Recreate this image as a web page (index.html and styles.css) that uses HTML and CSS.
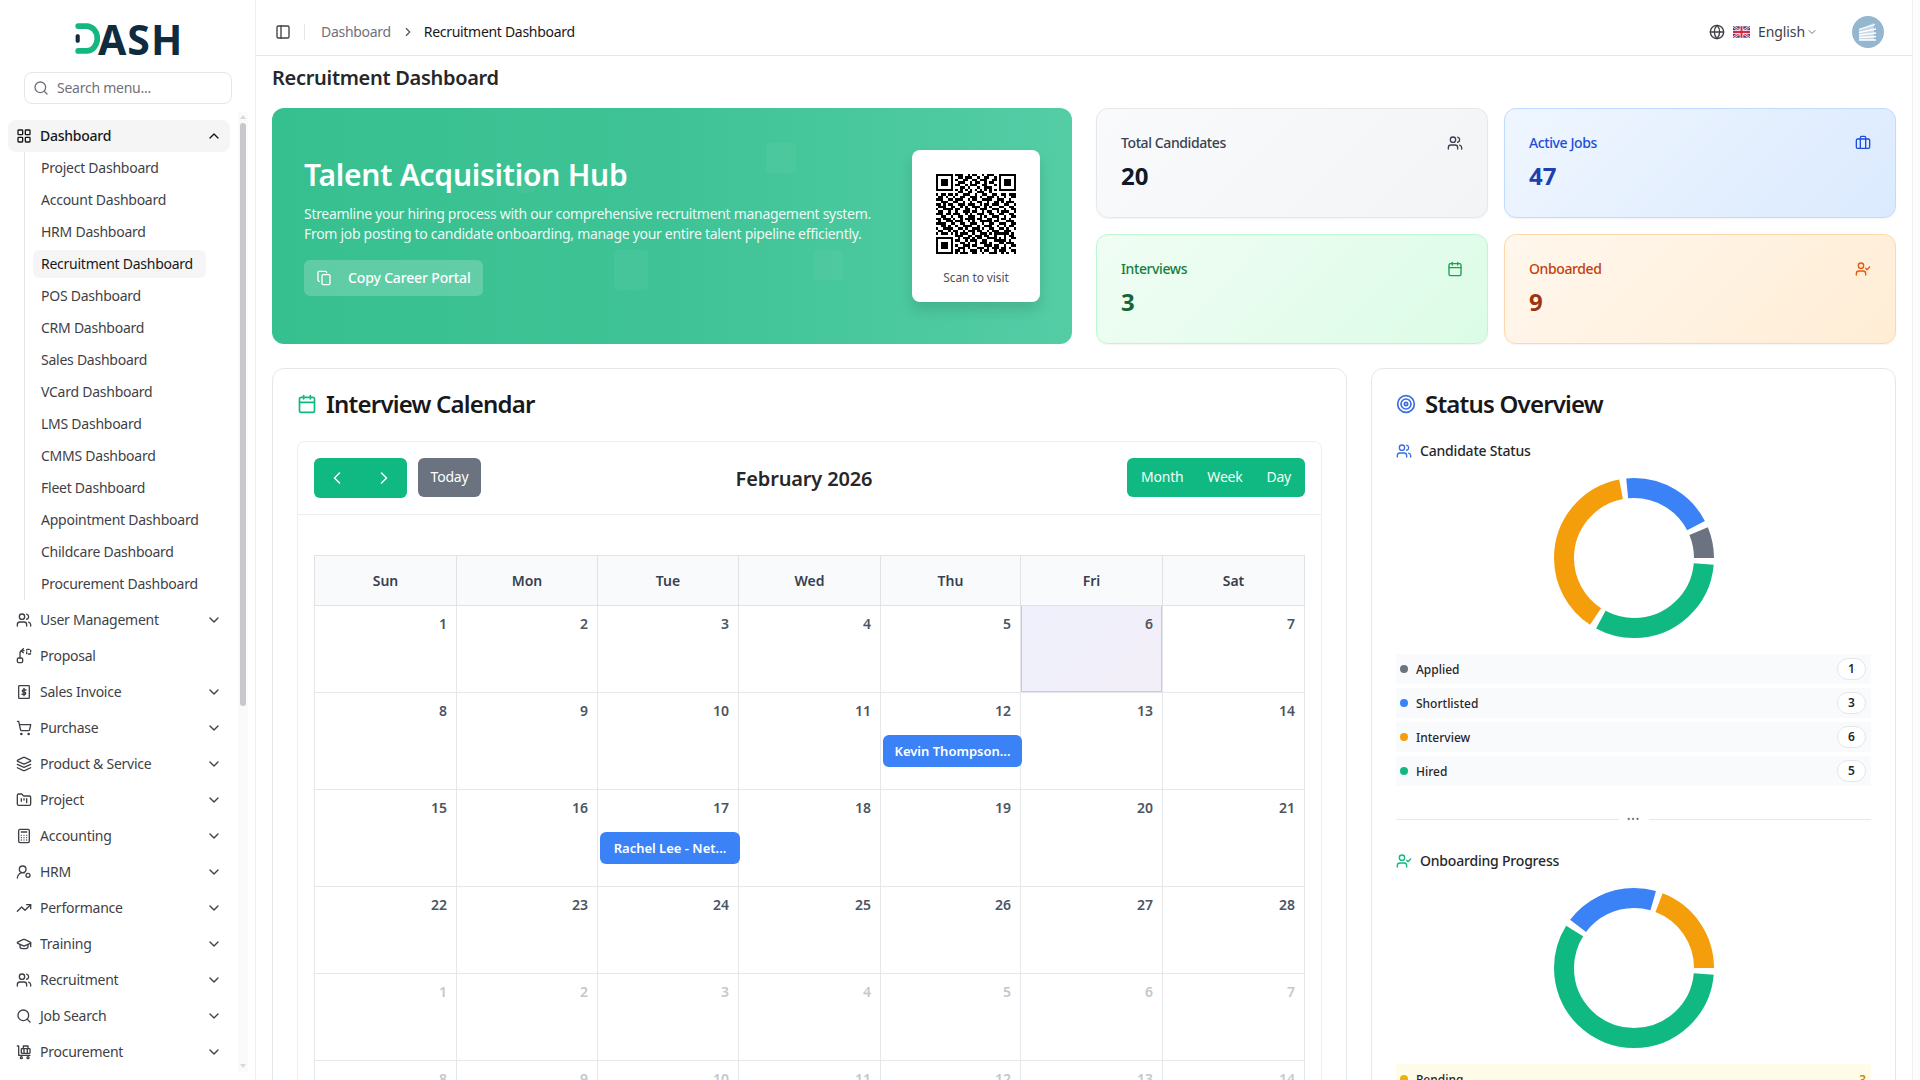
FILE: index.html
```html
<!DOCTYPE html>
<html lang="en">
  <head>
    <meta charset="UTF-8" />
    <meta name="viewport" content="width=device-width, initial-scale=1.0" />
    <title>Recruitment Dashboard</title>
    <link rel="stylesheet" href="styles.css">
  </head>
  <body>
    <!-- icon sprite -->
    <svg class="sprite" xmlns="http://www.w3.org/2000/svg">
      <symbol id="i-grid" viewBox="0 0 24 24"><rect x="3" y="3" width="7" height="7" rx="1"/><rect x="14" y="3" width="7" height="7" rx="1"/><rect x="14" y="14" width="7" height="7" rx="1"/><rect x="3" y="14" width="7" height="7" rx="1"/></symbol>
      <symbol id="i-search" viewBox="0 0 24 24"><circle cx="11" cy="11" r="8"/><path d="m21 21-4.3-4.3"/></symbol>
      <symbol id="i-down" viewBox="0 0 24 24"><path d="m6 9 6 6 6-6"/></symbol>
      <symbol id="i-up" viewBox="0 0 24 24"><path d="m18 15-6-6-6 6"/></symbol>
      <symbol id="i-left" viewBox="0 0 24 24"><path d="m15 18-6-6 6-6"/></symbol>
      <symbol id="i-right" viewBox="0 0 24 24"><path d="m9 18 6-6-6-6"/></symbol>
      <symbol id="i-users" viewBox="0 0 24 24"><path d="M16 21v-2a4 4 0 0 0-4-4H6a4 4 0 0 0-4 4v2"/><circle cx="9" cy="7" r="4"/><path d="M22 21v-2a4 4 0 0 0-3-3.87"/><path d="M16 3.13a4 4 0 0 1 0 7.75"/></symbol>
      <symbol id="i-proposal" viewBox="0 0 24 24"><rect x="2" y="15" width="8" height="7" rx="2"/><path d="M6 15V8a4 4 0 0 1 4-4h2"/><path d="m11 1-3 3 3 3"/><rect x="16" y="2" width="6" height="7" rx="1" stroke-dasharray="3 2.5"/></symbol>
      <symbol id="i-invoice" viewBox="0 0 24 24"><rect x="4" y="2.5" width="16" height="19" rx="1" stroke-dasharray="2 .8"/><path d="M12 6.5v11"/><path d="M15 9h-4a1.6 1.6 0 0 0 0 3.2h2a1.6 1.6 0 0 1 0 3.2H9"/></symbol>
      <symbol id="i-cart" viewBox="0 0 24 24"><circle cx="8" cy="21" r="1"/><circle cx="19" cy="21" r="1"/><path d="M2.05 2.05h2l2.66 12.42a2 2 0 0 0 2 1.58h9.78a2 2 0 0 0 1.95-1.57l1.65-7.43H5.12"/></symbol>
      <symbol id="i-layers" viewBox="0 0 24 24"><path d="M12.83 2.18a2 2 0 0 0-1.66 0L2.6 6.08a1 1 0 0 0 0 1.83l8.58 3.91a2 2 0 0 0 1.66 0l8.58-3.9a1 1 0 0 0 0-1.83Z"/><path d="m22 17.65-9.17 4.16a2 2 0 0 1-1.66 0L2 17.65"/><path d="m22 12.65-9.17 4.16a2 2 0 0 1-1.66 0L2 12.65"/></symbol>
      <symbol id="i-folder" viewBox="0 0 24 24"><path d="M4 20h16a2 2 0 0 0 2-2V8a2 2 0 0 0-2-2h-7.93a2 2 0 0 1-1.66-.9l-.82-1.2A2 2 0 0 0 7.93 3H4a2 2 0 0 0-2 2v13c0 1.1.9 2 2 2Z"/><path d="M8 10v4"/><path d="M12 10v2"/><path d="M16 10v6"/></symbol>
      <symbol id="i-calc" viewBox="0 0 24 24"><rect x="4" y="2" width="16" height="20" rx="2"/><path d="M8 6h8"/><path d="M8 11h.01M12 11h.01M16 11h.01M8 14.5h.01M12 14.5h.01M16 14.5h.01M8 18h.01M12 18h.01M16 18h.01"/></symbol>
      <symbol id="i-usercog" viewBox="0 0 24 24"><path d="M2 21a8 8 0 0 1 10.43-7.62"/><circle cx="10" cy="8" r="5"/><circle cx="18" cy="17" r="3"/></symbol>
      <symbol id="i-trend" viewBox="0 0 24 24"><path d="M22 7 13.5 15.5 8.5 10.5 2 17"/><path d="M16 7h6v6"/></symbol>
      <symbol id="i-cap" viewBox="0 0 24 24"><path d="M21.42 10.92a1 1 0 0 0-.02-1.84L12.83 5.18a2 2 0 0 0-1.66 0L2.6 9.08a1 1 0 0 0 0 1.83l8.57 3.91a2 2 0 0 0 1.66 0z"/><path d="M22 10v6"/><path d="M6 12.5V16a6 3 0 0 0 12 0v-3.5"/></symbol>
      <symbol id="i-basket" viewBox="0 0 24 24"><path d="M2 3h2v14h17"/><rect x="8" y="7" width="13" height="7" rx="1"/><path d="M11 7V3h7v4"/><path d="M12 7v7M17 7v7"/><circle cx="8" cy="20.5" r="1.5"/><circle cx="18" cy="20.5" r="1.5"/></symbol>
      <symbol id="i-calendar" viewBox="0 0 24 24"><path d="M8 2v4"/><path d="M16 2v4"/><rect x="3" y="4" width="18" height="18" rx="2"/><path d="M3 10h18"/></symbol>
      <symbol id="i-target" viewBox="0 0 24 24"><circle cx="12" cy="12" r="10"/><circle cx="12" cy="12" r="6"/><circle cx="12" cy="12" r="2"/></symbol>
      <symbol id="i-usercheck" viewBox="0 0 24 24"><path d="M16 21v-2a4 4 0 0 0-4-4H6a4 4 0 0 0-4 4v2"/><circle cx="9" cy="7" r="4"/><path d="m16 11 2 2 4-4"/></symbol>
      <symbol id="i-brief" viewBox="0 0 24 24"><path d="M16 20V4a2 2 0 0 0-2-2h-4a2 2 0 0 0-2 2v16"/><rect x="2" y="6" width="20" height="14" rx="2"/></symbol>
      <symbol id="i-copy" viewBox="0 0 24 24"><rect x="9" y="7" width="12" height="15" rx="2"/><path d="M5 17a2 2 0 0 1-2-2V4a2 2 0 0 1 2-2h9a2 2 0 0 1 2 2"/></symbol>
      <symbol id="i-panel" viewBox="0 0 24 24"><rect x="3" y="3" width="18" height="18" rx="2"/><path d="M9 3v18"/></symbol>
      <symbol id="i-globe" viewBox="0 0 24 24"><circle cx="12" cy="12" r="10"/><path d="M12 2a14.5 14.5 0 0 0 0 20 14.5 14.5 0 0 0 0-20"/><path d="M2 12h20"/></symbol>
    </svg>

    <div class="app">
      <!-- sidebar -->
      <aside class="sidebar">
        <div class="logo">
          <svg class="logo-mark" viewBox="0 0 24 30" role="img" aria-label="D">
            <path d="M3 3h8a10.500 12 0 0 1 0 24H3" fill="none" stroke="#14b77f" stroke-width="5.5" stroke-linecap="round"/>
            <rect x="0.5" y="11" width="4" height="8" rx="1.5" fill="#0f2b3d"/>
          </svg>
          <span class="logo-text">ASH</span>
        </div>
        <div class="search">
          <svg class="icon"><use href="#i-search"/></svg>
          <span>Search menu...</span>
        </div>
        <div class="side-body">
          <nav class="menu">
            <a class="menu-row menu-open">
              <svg class="icon"><use href="#i-grid"/></svg>
              <span class="menu-label">Dashboard</span>
              <svg class="icon"><use href="#i-up"/></svg>
            </a>
            <div class="submenu">
              <a class="sub-item">Project Dashboard</a>
              <a class="sub-item">Account Dashboard</a>
              <a class="sub-item">HRM Dashboard</a>
              <a class="sub-item sub-active">Recruitment Dashboard</a>
              <a class="sub-item">POS Dashboard</a>
              <a class="sub-item">CRM Dashboard</a>
              <a class="sub-item">Sales Dashboard</a>
              <a class="sub-item">VCard Dashboard</a>
              <a class="sub-item">LMS Dashboard</a>
              <a class="sub-item">CMMS Dashboard</a>
              <a class="sub-item">Fleet Dashboard</a>
              <a class="sub-item">Appointment Dashboard</a>
              <a class="sub-item">Childcare Dashboard</a>
              <a class="sub-item">Procurement Dashboard</a>
            </div>
            <a class="menu-row"><svg class="icon"><use href="#i-users"/></svg><span class="menu-label">User Management</span><svg class="icon"><use href="#i-down"/></svg></a>
            <a class="menu-row"><svg class="icon"><use href="#i-proposal"/></svg><span class="menu-label">Proposal</span></a>
            <a class="menu-row"><svg class="icon"><use href="#i-invoice"/></svg><span class="menu-label">Sales Invoice</span><svg class="icon"><use href="#i-down"/></svg></a>
            <a class="menu-row"><svg class="icon"><use href="#i-cart"/></svg><span class="menu-label">Purchase</span><svg class="icon"><use href="#i-down"/></svg></a>
            <a class="menu-row"><svg class="icon"><use href="#i-layers"/></svg><span class="menu-label">Product &amp; Service</span><svg class="icon"><use href="#i-down"/></svg></a>
            <a class="menu-row"><svg class="icon"><use href="#i-folder"/></svg><span class="menu-label">Project</span><svg class="icon"><use href="#i-down"/></svg></a>
            <a class="menu-row"><svg class="icon"><use href="#i-calc"/></svg><span class="menu-label">Accounting</span><svg class="icon"><use href="#i-down"/></svg></a>
            <a class="menu-row"><svg class="icon"><use href="#i-usercog"/></svg><span class="menu-label">HRM</span><svg class="icon"><use href="#i-down"/></svg></a>
            <a class="menu-row"><svg class="icon"><use href="#i-trend"/></svg><span class="menu-label">Performance</span><svg class="icon"><use href="#i-down"/></svg></a>
            <a class="menu-row"><svg class="icon"><use href="#i-cap"/></svg><span class="menu-label">Training</span><svg class="icon"><use href="#i-down"/></svg></a>
            <a class="menu-row"><svg class="icon"><use href="#i-users"/></svg><span class="menu-label">Recruitment</span><svg class="icon"><use href="#i-down"/></svg></a>
            <a class="menu-row"><svg class="icon"><use href="#i-search"/></svg><span class="menu-label">Job Search</span><svg class="icon"><use href="#i-down"/></svg></a>
            <a class="menu-row"><svg class="icon"><use href="#i-basket"/></svg><span class="menu-label">Procurement</span><svg class="icon"><use href="#i-down"/></svg></a>
          </nav>
          <div class="side-scroll">
            <span class="arrow-up"></span>
            <span class="side-thumb"></span>
            <span class="arrow-down"></span>
          </div>
        </div>
      </aside>

      <div class="main">
        <!-- top bar -->
        <header class="topbar">
          <svg class="icon panel-icon"><use href="#i-panel"/></svg>
          <span class="top-divider"></span>
          <span class="crumb">Dashboard</span>
          <svg class="icon crumb-sep"><use href="#i-right"/></svg>
          <span class="crumb crumb-now">Recruitment Dashboard</span>
          <div class="top-right">
            <svg class="icon globe"><use href="#i-globe"/></svg>
            <svg class="flag" viewBox="0 0 60 40">
              <rect width="60" height="40" fill="#2b3f8c"/>
              <path d="M0 0l60 40M60 0L0 40" stroke="#fff" stroke-width="9"/>
              <path d="M0 0l60 40M60 0L0 40" stroke="#d8283f" stroke-width="4"/>
              <path d="M30 0v40M0 20h60" stroke="#fff" stroke-width="13"/>
              <path d="M30 0v40M0 20h60" stroke="#d8283f" stroke-width="7"/>
            </svg>
            <span class="lang">English</span>
            <svg class="icon lang-caret"><use href="#i-down"/></svg>
            <svg class="avatar" viewBox="0 0 32 32">
              <circle cx="16" cy="16" r="16" fill="#94b6ce"/>
              <path d="M7 13l15-6v17H7z" fill="#c4d8e6"/>
              <path d="M7 13.5l16-5M7 16.5l17-3.500M7 19l17-2M7 21.500l17-1M7 24h17" stroke="#fff" stroke-width="1.300" fill="none"/>
            </svg>
          </div>
        </header>

        <main class="content">
          <h1 class="page-title">Recruitment Dashboard</h1>

          <section class="top-grid">
            <!-- hero banner -->
            <div class="hero">
              <span class="hero-deco deco-1"></span>
              <span class="hero-deco deco-2"></span>
              <span class="hero-deco deco-3"></span>
              <span class="hero-deco deco-4"></span>
              <div class="hero-text">
                <h2 class="hero-title">Talent Acquisition Hub</h2>
                <p class="hero-desc">Streamline your hiring process with our comprehensive recruitment management system.<br>From job posting to candidate onboarding, manage your entire talent pipeline efficiently.</p>
                <button class="hero-btn">
                  <svg class="icon"><use href="#i-copy"/></svg>
                  Copy Career Portal
                </button>
              </div>
              <div class="qr-card">
                <svg class="qr" viewBox="0 0 33 33" shape-rendering="crispEdges">
                  <path stroke="#000" d="M0 .5h7M8 .5h3M13 .5h1M15 .5h2M19 .5h1M21 .5h3M26 .5h7
                  M0 1.5h1M6 1.5h1M9 1.5h2M12 1.5h3M17 1.5h1M20 1.5h2M24 1.5h1M26 1.5h1M32 1.5h1
                  M0 2.5h1M2 2.5h3M6 2.5h1M8 2.5h1M11 2.5h2M15 2.5h2M18 2.5h3M23 2.5h2M26 2.5h1M28 2.5h3M32 2.5h1
                  M0 3.5h1M2 3.5h3M6 3.5h1M9 3.5h3M14 3.5h1M16 3.5h2M20 3.5h1M22 3.5h2M26 3.5h1M28 3.5h3M32 3.5h1
                  M0 4.5h1M2 4.5h3M6 4.5h1M8 4.5h2M12 4.5h1M14 4.5h3M19 4.5h2M24 4.5h1M26 4.5h1M28 4.5h3M32 4.5h1
                  M0 5.5h1M6 5.5h1M10 5.5h2M13 5.5h1M17 5.5h1M20 5.5h3M26 5.5h1M32 5.5h1
                  M0 6.5h7M8 6.5h1M10 6.5h1M12 6.5h1M14 6.5h1M16 6.5h1M18 6.5h1M20 6.5h1M22 6.5h1M24 6.5h1M26 6.5h7
                  M9 7.5h2M13 7.5h2M17 7.5h3M22 7.5h1
                  M0 8.5h1M2 8.5h2M5 8.5h2M8 8.5h1M11 8.5h3M16 8.5h1M19 8.5h2M23 8.5h2M27 8.5h2M30 8.5h3
                  M1 9.5h2M4 9.5h1M7 9.5h1M10 9.5h2M14 9.5h3M18 9.5h1M21 9.5h3M25 9.5h1M28 9.5h1M31 9.5h2
                  M0 10.5h3M5 10.5h2M8 10.5h3M13 10.5h1M15 10.5h2M19 10.5h4M25 10.5h3M30 10.5h1
                  M2 11.5h3M7 11.5h2M11 11.5h1M14 11.5h1M17 11.5h2M21 11.5h1M24 11.5h2M27 11.5h1M29 11.5h3
                  M0 12.5h2M3 12.5h1M5 12.5h2M9 12.5h3M13 12.5h3M18 12.5h1M20 12.5h2M23 12.5h3M28 12.5h2M32 12.5h1
                  M1 13.5h3M6 13.5h2M10 13.5h1M12 13.5h1M15 13.5h3M20 13.5h1M22 13.5h1M26 13.5h2M30 13.5h2
                  M0 14.5h1M3 14.5h4M8 14.5h2M12 14.5h2M16 14.5h1M18 14.5h3M23 14.5h3M28 14.5h1M31 14.5h2
                  M1 15.5h2M5 15.5h1M8 15.5h1M11 15.5h3M15 15.5h2M19 15.5h1M21 15.5h2M25 15.5h1M27 15.5h3M32 15.5h1
                  M0 16.5h3M4 16.5h2M7 16.5h3M12 16.5h1M14 16.5h1M17 16.5h3M22 16.5h2M26 16.5h2M30 16.5h2
                  M2 17.5h2M6 17.5h1M9 17.5h2M13 17.5h3M18 17.5h1M20 17.5h1M23 17.5h3M28 17.5h1M31 17.5h2
                  M0 18.5h2M3 18.5h3M7 18.5h1M10 18.5h1M12 18.5h4M17 18.5h2M21 18.5h2M25 18.5h1M27 18.5h2M30 18.5h1
                  M1 19.5h1M4 19.5h3M8 19.5h3M13 19.5h1M15 19.5h1M18 19.5h5M24 19.5h2M29 19.5h3
                  M0 20.5h4M6 20.5h2M10 20.5h2M14 20.5h3M19 20.5h1M22 20.5h2M26 20.5h3M31 20.5h2
                  M2 21.5h2M5 21.5h1M8 21.5h1M11 21.5h4M17 21.5h1M20 21.5h3M25 21.5h1M28 21.5h1M30 21.5h2
                  M0 22.5h1M3 22.5h4M9 22.5h2M12 22.5h1M15 22.5h3M19 22.5h1M22 22.5h2M26 22.5h2M29 22.5h1M32 22.5h1
                  M1 23.5h2M5 23.5h1M7 23.5h2M11 23.5h1M13 23.5h3M17 23.5h2M21 23.5h1M23 23.5h3M28 23.5h3
                  M0 24.5h1M2 24.5h3M6 24.5h1M8 24.5h1M10 24.5h3M15 24.5h1M18 24.5h3M22 24.5h1M24 24.5h6M31 24.5h1
                  M8 25.5h3M13 25.5h2M16 25.5h3M20 25.5h2M24 25.5h1M28 25.5h1M30 25.5h2
                  M0 26.5h7M9 26.5h1M11 26.5h3M15 26.5h1M17 26.5h2M21 26.5h3M24 26.5h1M26 26.5h1M28 26.5h1M31 26.5h2
                  M0 27.5h1M6 27.5h1M8 27.5h2M12 27.5h1M14 27.5h3M19 27.5h2M24 27.5h5M30 27.5h1
                  M0 28.5h1M2 28.5h3M6 28.5h1M10 28.5h2M13 28.5h1M16 28.5h1M18 28.5h3M22 28.5h1M26 28.5h2M29 28.5h3
                  M0 29.5h1M2 29.5h3M6 29.5h1M8 29.5h1M11 29.5h3M15 29.5h2M20 29.5h3M24 29.5h2M28 29.5h1M31 29.5h2
                  M0 30.5h1M2 30.5h3M6 30.5h1M9 30.5h3M13 30.5h1M17 30.5h3M21 30.5h1M23 30.5h3M27 30.5h2M30 30.5h1
                  M0 31.5h1M6 31.5h1M8 31.5h2M11 31.5h1M14 31.5h3M18 31.5h1M20 31.5h2M24 31.5h1M26 31.5h3M31 31.5h2
                  M0 32.5h7M8 32.5h1M10 32.5h3M15 32.5h2M19 32.5h1M22 32.5h3M27 32.5h1M29 32.5h1M32 32.5h1"/>
                </svg>
                <span class="qr-label">Scan to visit</span>
              </div>
            </div>

            <!-- stat cards -->
            <div class="stats">
              <div class="stat stat-gray">
                <div class="stat-head"><span>Total Candidates</span><svg class="icon"><use href="#i-users"/></svg></div>
                <div class="stat-num">20</div>
              </div>
              <div class="stat stat-blue">
                <div class="stat-head"><span>Active Jobs</span><svg class="icon"><use href="#i-brief"/></svg></div>
                <div class="stat-num">47</div>
              </div>
              <div class="stat stat-green">
                <div class="stat-head"><span>Interviews</span><svg class="icon"><use href="#i-calendar"/></svg></div>
                <div class="stat-num">3</div>
              </div>
              <div class="stat stat-orange">
                <div class="stat-head"><span>Onboarded</span><svg class="icon"><use href="#i-usercheck"/></svg></div>
                <div class="stat-num">9</div>
              </div>
            </div>
          </section>

          <section class="lower-grid">
            <!-- calendar -->
            <div class="card">
              <h2 class="card-title"><svg class="icon icon-green"><use href="#i-calendar"/></svg>Interview Calendar</h2>
              <div class="calendar">
                <div class="cal-toolbar">
                  <div class="cal-nav">
                    <div class="nav-group">
                      <svg class="icon"><use href="#i-left"/></svg>
                      <svg class="icon"><use href="#i-right"/></svg>
                    </div>
                    <button class="today-btn">Today</button>
                  </div>
                  <div class="cal-month">February 2026</div>
                  <div class="view-group"><span>Month</span><span>Week</span><span>Day</span></div>
                </div>
                <div class="cal-body">
                  <table class="cal-table">
                    <thead>
                      <tr><th>Sun</th><th>Mon</th><th>Tue</th><th>Wed</th><th>Thu</th><th>Fri</th><th>Sat</th></tr>
                    </thead>
                    <tbody>
                      <tr>
                        <td><div class="day">1</div></td><td><div class="day">2</div></td><td><div class="day">3</div></td><td><div class="day">4</div></td><td><div class="day">5</div></td><td class="today"><div class="day">6</div></td><td><div class="day">7</div></td>
                      </tr>
                      <tr>
                        <td><div class="day">8</div></td><td><div class="day">9</div></td><td><div class="day">10</div></td><td><div class="day">11</div></td>
                        <td><div class="day">12</div><div class="event">Kevin Thompson...</div></td>
                        <td><div class="day">13</div></td><td><div class="day">14</div></td>
                      </tr>
                      <tr>
                        <td><div class="day">15</div></td><td><div class="day">16</div></td>
                        <td><div class="day">17</div><div class="event">Rachel Lee - Net...</div></td>
                        <td><div class="day">18</div></td><td><div class="day">19</div></td><td><div class="day">20</div></td><td><div class="day">21</div></td>
                      </tr>
                      <tr>
                        <td><div class="day">22</div></td><td><div class="day">23</div></td><td><div class="day">24</div></td><td><div class="day">25</div></td><td><div class="day">26</div></td><td><div class="day">27</div></td><td><div class="day">28</div></td>
                      </tr>
                      <tr class="other-month">
                        <td><div class="day">1</div></td><td><div class="day">2</div></td><td><div class="day">3</div></td><td><div class="day">4</div></td><td><div class="day">5</div></td><td><div class="day">6</div></td><td><div class="day">7</div></td>
                      </tr>
                      <tr class="other-month">
                        <td><div class="day">8</div></td><td><div class="day">9</div></td><td><div class="day">10</div></td><td><div class="day">11</div></td><td><div class="day">12</div></td><td><div class="day">13</div></td><td><div class="day">14</div></td>
                      </tr>
                    </tbody>
                  </table>
                </div>
              </div>
            </div>

            <!-- status overview -->
            <div class="card">
              <h2 class="card-title"><svg class="icon icon-blue"><use href="#i-target"/></svg>Status Overview</h2>

              <h3 class="sub-title"><svg class="icon icon-blue"><use href="#i-users"/></svg>Candidate Status</h3>
              <svg class="donut" viewBox="-80 -80 160 160">
                <g transform="scale(1 -1)" fill="none" stroke-width="20">
                  <circle r="70" pathLength="360" stroke="#6b7280" stroke-dasharray="22.67 360"/>
                  <circle r="70" pathLength="360" stroke="#3b82f6" stroke-dasharray="68 360" stroke-dashoffset="-27.67"/>
                  <circle r="70" pathLength="360" stroke="#f59e0b" stroke-dasharray="136 360" stroke-dashoffset="-100.67"/>
                  <circle r="70" pathLength="360" stroke="#10b981" stroke-dasharray="113.33 360" stroke-dashoffset="-241.67"/>
                </g>
              </svg>
              <ul class="legend">
                <li class="legend-row"><span class="dot dot-gray"></span><span class="legend-name">Applied</span><span class="badge">1</span></li>
                <li class="legend-row"><span class="dot dot-blue"></span><span class="legend-name">Shortlisted</span><span class="badge">3</span></li>
                <li class="legend-row"><span class="dot dot-orange"></span><span class="legend-name">Interview</span><span class="badge">6</span></li>
                <li class="legend-row"><span class="dot dot-green"></span><span class="legend-name">Hired</span><span class="badge">5</span></li>
              </ul>

              <div class="separator"><span></span><i>•••</i><span></span></div>

              <h3 class="sub-title"><svg class="icon icon-green"><use href="#i-usercheck"/></svg>Onboarding Progress</h3>
              <svg class="donut" viewBox="-80 -80 160 160">
                <g transform="scale(1 -1)" fill="none" stroke-width="20">
                  <circle r="70" pathLength="360" stroke="#f59e0b" stroke-dasharray="69 360"/>
                  <circle r="70" pathLength="360" stroke="#3b82f6" stroke-dasharray="69 360" stroke-dashoffset="-74"/>
                  <circle r="70" pathLength="360" stroke="#10b981" stroke-dasharray="207 360" stroke-dashoffset="-148"/>
                </g>
              </svg>
              <ul class="legend">
                <li class="legend-row legend-pending"><span class="dot dot-yellow"></span><span class="legend-name">Pending</span><span class="pending-num">3</span></li>
              </ul>
            </div>
          </section>
        </main>
      </div>

      <div class="page-scroll"></div>
    </div>
  </body>
</html>
```

FILE: styles.css
```css
* {
  margin: 0;
  padding: 0;
  box-sizing: border-box;
}

body {
  font-family: "Noto Sans", "Liberation Sans", sans-serif;
  color: #18181b;
  background: #fff;
  width: 100vw;
  height: 100vh;
  overflow: hidden;
}

.sprite {
  display: none;
}

.icon {
  width: 16px;
  height: 16px;
  flex: none;
  fill: none;
  stroke: currentColor;
  stroke-width: 2;
  stroke-linecap: round;
  stroke-linejoin: round;
}

.app {
  display: flex;
  height: 100%;
}

/* sidebar */
.sidebar {
  width: 256px;
  flex: none;
  border-right: 1px solid #eeeeef;
  display: flex;
  flex-direction: column;
  height: 100%;
  overflow: hidden;
}

.logo {
  height: 72px;
  padding: 23px 0 0 75px;
  display: flex;
  align-items: flex-start;
}

.logo-mark {
  width: 25px;
  height: 31px;
  flex: none;
}

.logo-text {
  font-size: 41px;
  line-height: 32px;
  font-weight: 700;
  letter-spacing: 1px;
  color: #0f2b3d;
  margin-left: -2px;
}

.search {
  margin-left: 24px;
  width: 208px;
  height: 32px;
  border: 1px solid #e5e7eb;
  border-radius: 8px;
  display: flex;
  align-items: center;
  gap: 8px;
  padding-left: 8px;
  font-size: 14px;
  letter-spacing: -0.25px;
  color: #71717a;
}

.search span {
  padding-bottom: 1px;
}

.side-body {
  display: flex;
  margin-top: 8px;
  flex: 1;
  min-height: 0;
}

.menu {
  width: 222px;
  margin: 8px 8px 0 8px;
  display: flex;
  flex-direction: column;
  gap: 4px;
}

.menu-row {
  height: 32px;
  display: flex;
  align-items: center;
  gap: 8px;
  padding: 0 8px;
  font-size: 14px;
  letter-spacing: -0.25px;
  color: #3f3f46;
  border-radius: 8px;
}

.menu-label {
  flex: 1;
  padding-bottom: 2px;
}

.menu-open {
  background: #f5f5f5;
  color: #18181b;
  font-weight: 500;
}

.submenu {
  margin: -4px 0 0 16px;
  border-left: 1px solid #e5e5e5;
  padding: 2px 0 2px 8px;
  display: flex;
  flex-direction: column;
  gap: 4px;
}

.sub-item {
  height: 28px;
  width: 173px;
  display: flex;
  align-items: center;
  padding: 0 0 2px 8px;
  font-size: 14px;
  letter-spacing: -0.25px;
  color: #3f3f46;
  border-radius: 6px;
  white-space: nowrap;
}

.sub-active {
  background: #f5f5f5;
  color: #18181b;
}

.side-scroll {
  width: 10px;
  background: #fafafa;
  display: flex;
  flex-direction: column;
  align-items: center;
  height: 960px;
  padding-top: 3px;
}

.side-thumb {
  width: 6px;
  height: 583px;
  margin-top: 4px;
  background: #c8c8cc;
  border-radius: 3px;
}

.arrow-up,
.arrow-down {
  width: 0;
  height: 0;
  border-left: 3px solid transparent;
  border-right: 3px solid transparent;
}

.arrow-up {
  border-bottom: 4px solid #d8d8d8;
}

.arrow-down {
  margin-top: auto;
  margin-bottom: 4px;
  border-top: 4px solid #d8d8d8;
}

/* main */
.main {
  flex: 1;
  min-width: 0;
  display: flex;
  flex-direction: column;
}

.page-scroll {
  width: 8px;
  flex: none;
  background: #fcfcfc;
  border-left: 1px solid #f0f0f0;
}

.topbar {
  height: 56px;
  flex: none;
  border-bottom: 1px solid #e5e7eb;
  display: flex;
  align-items: center;
  padding: 8px 28px 0 19px;
}

.panel-icon {
  color: #3f3f46;
}

.top-divider {
  width: 1px;
  height: 16px;
  background: #e5e7eb;
  margin: 0 16px 0 13px;
}

.crumb {
  font-size: 14px;
  letter-spacing: -0.3px;
  color: #71717a;
}

.crumb-now {
  color: #18181b;
}

.crumb-sep {
  width: 14px;
  height: 14px;
  color: #52525b;
  margin: 0 9px 0 10px;
}

.top-right {
  margin-left: auto;
  display: flex;
  align-items: center;
}

.globe {
  color: #3f3f46;
}

.flag {
  width: 17px;
  height: 12px;
  margin: 0 8px 0 8px;
}

.lang {
  font-size: 14px;
  letter-spacing: -0.1px;
  color: #3f3f46;
}

.lang-caret {
  width: 12px;
  height: 12px;
  color: #71717a;
  margin: 0 34px 0 1px;
}

.avatar {
  width: 32px;
  height: 32px;
}

.content {
  flex: 1;
  min-height: 0;
  overflow: hidden;
  padding: 8px 16px 0 16px;
}

.page-title {
  font-size: 20px;
  line-height: 28px;
  font-weight: 600;
  letter-spacing: -0.3px;
  color: #27272a;
  margin-bottom: 16px;
}

.top-grid {
  display: grid;
  grid-template-columns: 1fr 1fr;
  gap: 24px;
}

/* hero */
.hero {
  position: relative;
  height: 236px;
  border-radius: 12px;
  background: linear-gradient(90deg, #37c08f 0%, #3fc396 50%, #54cda5 100%);
  display: flex;
  align-items: center;
  justify-content: space-between;
  padding: 0 32px;
  color: #fff;
  overflow: hidden;
}

.hero-deco {
  position: absolute;
  background: rgba(255, 255, 255, 0.04);
  border-radius: 4px;
}

.deco-1 {
  left: 494px;
  top: 35px;
  width: 30px;
  height: 30px;
}

.deco-2 {
  left: 342px;
  top: 142px;
  width: 34px;
  height: 40px;
}

.deco-3 {
  left: 542px;
  top: 142px;
  width: 29px;
  height: 30px;
}

.deco-4 {
  left: 244px;
  top: 65px;
  width: 19px;
  height: 20px;
}

.hero-text {
  position: relative;
}

.hero-title {
  font-size: 30px;
  line-height: 36px;
  font-weight: 600;
  letter-spacing: -0.25px;
  margin-bottom: 11px;
}

.hero-desc {
  font-size: 14px;
  line-height: 20px;
  letter-spacing: -0.3px;
  color: rgba(255, 255, 255, 0.92);
  margin-bottom: 16px;
  white-space: nowrap;
}

.hero-btn {
  height: 36px;
  width: 179px;
  border: none;
  border-radius: 6px;
  background: rgba(255, 255, 255, 0.2);
  color: #fff;
  font-family: inherit;
  font-size: 14px;
  font-weight: 500;
  letter-spacing: -0.15px;
  display: flex;
  align-items: center;
  gap: 16px;
  padding-left: 12px;
  white-space: nowrap;
}

.qr-card {
  position: relative;
  width: 128px;
  height: 152px;
  flex: none;
  background: #fff;
  border-radius: 8px;
  box-shadow: 0 8px 14px rgba(0, 0, 0, 0.12);
  display: flex;
  flex-direction: column;
  align-items: center;
  padding-top: 24px;
}

.qr {
  width: 80px;
  height: 80px;
}

.qr-label {
  font-size: 12px;
  line-height: 16px;
  letter-spacing: -0.1px;
  color: #52525b;
  margin-top: 16px;
}

/* stat cards */
.stats {
  display: grid;
  grid-template-columns: 1fr 1fr;
  grid-template-rows: 110px 110px;
  gap: 16px;
}

.stat {
  border: 1px solid;
  border-radius: 12px;
  padding: 24px;
  box-shadow: 0 1px 2px rgba(0, 0, 0, 0.05);
}

.stat-head {
  display: flex;
  justify-content: space-between;
  align-items: center;
  font-size: 14px;
  line-height: 20px;
  font-weight: 500;
  letter-spacing: -0.4px;
}

.stat-num {
  font-size: 24px;
  line-height: 32px;
  font-weight: 700;
  margin-top: 7px;
}

.stat-gray {
  background: linear-gradient(135deg, #f9fafb, #f3f4f6);
  border-color: #e5e7eb;
  color: #374151;
}

.stat-gray .stat-num {
  color: #111827;
}

.stat-blue {
  background: linear-gradient(135deg, #eff6ff, #dbeafe);
  border-color: #bfdbfe;
  color: #1d4ed8;
}

.stat-blue .stat-num {
  color: #1e40af;
}

.stat-green {
  background: linear-gradient(135deg, #f0fdf4, #dcfce7);
  border-color: #bbf7d0;
  color: #15803d;
}

.stat-green .icon {
  color: #16a34a;
}

.stat-green .stat-num {
  color: #166534;
}

.stat-orange {
  background: linear-gradient(135deg, #fff7ed, #ffedd5);
  border-color: #fed7aa;
  color: #c2410c;
}

.stat-orange .icon {
  color: #ea580c;
}

.stat-orange .stat-num {
  color: #9a3412;
}

/* lower cards */
.lower-grid {
  display: grid;
  grid-template-columns: minmax(0, 1fr) 525px;
  gap: 24px;
  margin-top: 24px;
  align-items: start;
}

.card {
  border: 1px solid #e5e7eb;
  border-radius: 12px;
  padding: 20px 24px;
  background: #fff;
}

.card-title {
  font-size: 24px;
  line-height: 30px;
  font-weight: 600;
  letter-spacing: -0.8px;
  color: #18181b;
  display: flex;
  align-items: center;
  gap: 9px;
}

.card-title .icon {
  width: 20px;
  height: 20px;
}

.icon-green {
  color: #10b981;
}

.icon-blue {
  color: #3b6fe0;
}

.calendar {
  margin-top: 22px;
  border: 1px solid #eceef1;
  border-radius: 8px;
}

.cal-toolbar {
  display: flex;
  align-items: center;
  justify-content: space-between;
  padding: 16px;
  height: 73px;
  border-bottom: 1px solid #eceef1;
}

.cal-nav {
  display: flex;
  gap: 11px;
}

.nav-group {
  width: 93px;
  height: 40px;
  background: #10b981;
  border-radius: 6px;
  color: #fff;
  display: flex;
  align-items: center;
  justify-content: space-between;
  padding: 0 13px;
}

.nav-group .icon {
  width: 20px;
  height: 20px;
  stroke-width: 1.8;
}

.today-btn {
  width: 63px;
  height: 39px;
  border: none;
  border-radius: 6px;
  background: #6b7280;
  color: #fff;
  font-family: inherit;
  font-size: 14px;
  letter-spacing: -0.2px;
  padding-bottom: 2px;
}

.cal-month {
  font-size: 20px;
  font-weight: 600;
  letter-spacing: -0.15px;
  color: #27272a;
}

.view-group {
  align-self: flex-start;
  width: 178px;
  height: 39px;
  background: #10b981;
  border-radius: 6px;
  color: #f0fdf9;
  font-size: 14px;
  letter-spacing: -0.2px;
  display: flex;
  align-items: center;
  justify-content: space-around;
  padding: 0 2px 2px 2px;
}

.cal-body {
  padding: 40px 16px 16px 16px;
}

.cal-table {
  width: 990px;
  table-layout: fixed;
  border-collapse: collapse;
}

.cal-table th {
  height: 50px;
  background: #f9fafb;
  border: 1px solid #e0e2e6;
  font-size: 14px;
  font-weight: 600;
  color: #374151;
  padding-bottom: 1px;
}

/* columns are not quite even in the real grid */
.cal-table th:nth-child(1),
.cal-table th:nth-child(4),
.cal-table th:nth-child(6),
.cal-table th:nth-child(7) {
  width: 142px;
}

.cal-table th:nth-child(2),
.cal-table th:nth-child(3) {
  width: 141px;
}

.cal-table th:nth-child(5) {
  width: 140px;
}

.cal-table td {
  height: 87px;
  border: 1px solid #e5e7eb;
  vertical-align: top;
  padding-bottom: 22px;
}

.cal-table td.today {
  background: linear-gradient(135deg, #eef0fb, #f3eff8);
  box-shadow: inset 1px 0 #c5c8f0, inset -1px 0 #c5c8f0, inset 0 -1px #c5c8f0;
}

.day {
  padding: 8px 9px 0 0;
  text-align: right;
  font-size: 14px;
  line-height: 20px;
  font-weight: 600;
  color: #4b5563;
  height: 29px;
}

.other-month .day {
  color: #c4c7cd;
}

.event {
  position: relative;
  margin: 13px -2px 0 2px;
  height: 32px;
  line-height: 32px;
  border-radius: 6px;
  background: #3b82f6;
  color: #fff;
  font-size: 13px;
  font-weight: 600;
  text-align: center;
  white-space: nowrap;
}

/* status overview */
.sub-title {
  font-size: 14px;
  line-height: 20px;
  font-weight: 500;
  letter-spacing: -0.2px;
  color: #27272a;
  margin-top: 22px;
  display: flex;
  align-items: center;
  gap: 8px;
}

.donut {
  display: block;
  width: 160px;
  height: 160px;
  margin: 17px auto 16px auto;
}

.legend {
  list-style: none;
  display: flex;
  flex-direction: column;
  gap: 4px;
}

.legend-row {
  height: 30px;
  background: #f9fafb;
  display: flex;
  align-items: center;
  padding: 0 5px 0 4px;
  font-size: 12px;
  color: #27272a;
}

.dot {
  width: 8px;
  height: 8px;
  border-radius: 50%;
  margin-right: 8px;
}

.dot-gray {
  background: #6b7280;
}

.dot-blue {
  background: #3b82f6;
}

.dot-orange {
  background: #f59e0b;
}

.dot-green {
  background: #10b981;
}

.dot-yellow {
  background: #eab308;
}

.legend-name {
  flex: 1;
  font-weight: 500;
}

.badge {
  width: 29px;
  height: 22px;
  border: 1px solid #e5e7eb;
  border-radius: 11px;
  background: #fff;
  text-align: center;
  line-height: 20px;
  font-weight: 600;
}

.legend-pending {
  background: #fefce8;
}

.pending-num {
  color: #ca8a04;
  font-weight: 600;
}

.separator {
  display: flex;
  align-items: center;
  gap: 8px;
  height: 2px;
  margin: 32px 0 -1px 0;
}

.separator span {
  flex: 1;
  height: 1px;
  background: #e5e7eb;
}

.separator i {
  font-style: normal;
  font-size: 9px;
  line-height: 2px;
  letter-spacing: 1px;
  color: #6b7280;
  width: 14px;
  white-space: nowrap;
  text-align: center;
}

.separator + .sub-title {
  margin-top: 32px;
}
```
